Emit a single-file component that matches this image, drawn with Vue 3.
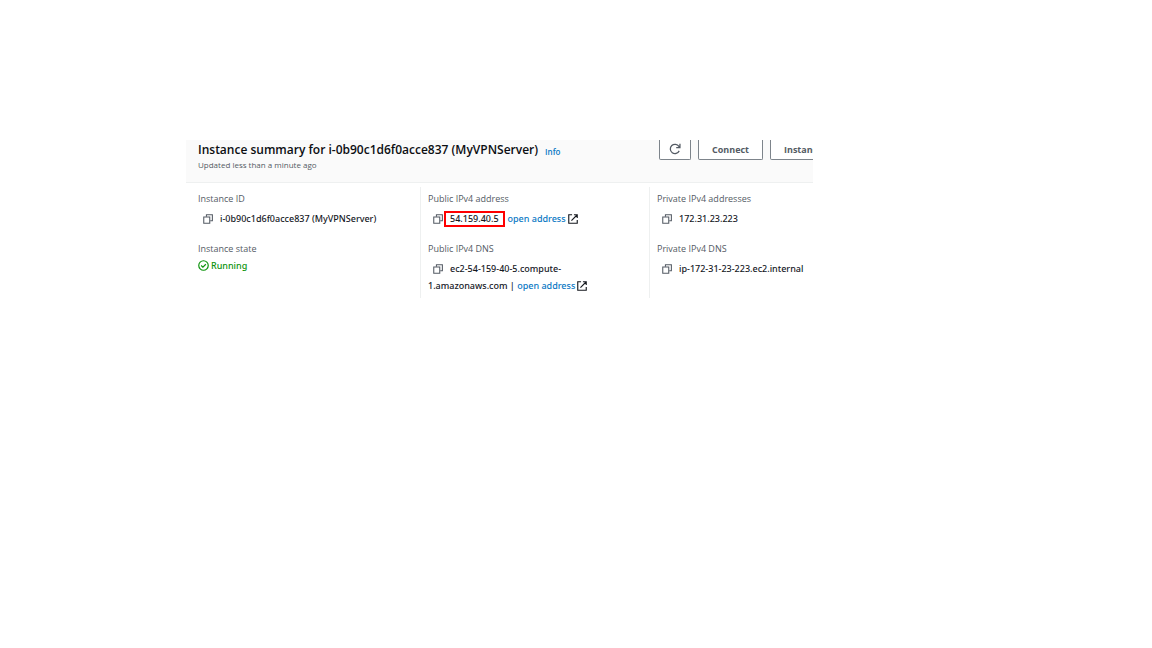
<script setup>
const copyBack = 'M5.5 4.5V1.2H15v9.6h-3.4'
const copyFront = 'M1.2 4.8h9.6v10H1.2z'
const external = 'M6.5 1.2H1.2v13.6h13.6V9.5M9.5 1.2h5.3v5.3M14.4 1.6L5.5 10.5'
</script>

<template>
  <main class="page">
    <section class="panel">
      <header class="head">
        <div class="titles">
          <div class="title-row">
            <h1>Instance summary for i-0b90c1d6f0acce837 (MyVPNServer)</h1>
            <a class="info" href="#">Info</a>
          </div>
          <p>Updated less than a minute ago</p>
        </div>
        <div class="actions">
          <button class="refresh" type="button" aria-label="Refresh">
            <svg viewBox="0 0 16 16" width="12" height="12"><path d="M13.6 10.5A6.2 6.2 0 1 1 13.2 4.6L14.3 6.2M14.6 1v5.3H9.6" /></svg>
          </button>
          <button type="button">Connect</button>
          <button type="button">Instance</button>
        </div>
      </header>

      <div class="columns">
        <dl>
          <dt>Instance ID</dt>
          <dd class="first">
            <button class="copy" type="button" aria-label="Copy instance ID"><svg viewBox="0 0 16 16"><path :d="copyBack" /><path :d="copyFront" /></svg></button><span>i-0b90c1d6f0acce837 (MyVPNServer)</span>
          </dd>
          <dt>Instance state</dt>
          <dd class="state">
            <svg viewBox="0 0 16 16"><circle cx="8" cy="8" r="6.9" /><path d="M4.6 8l2.5 2.5 4.3-4.3" /></svg><span>Running</span>
          </dd>
        </dl>
        <dl>
          <dt>Public IPv4 address</dt>
          <dd class="first">
            <button class="copy tight" type="button" aria-label="Copy public address"><svg viewBox="0 0 16 16"><path :d="copyBack" /><path :d="copyFront" /></svg></button><mark>54.159.40.5</mark><a href="#">open address<svg class="ext" viewBox="0 0 16 16"><path :d="external" /></svg></a>
          </dd>
          <dt>Public IPv4 DNS</dt>
          <dd>
            <button class="copy" type="button" aria-label="Copy public DNS"><svg viewBox="0 0 16 16"><path :d="copyBack" /><path :d="copyFront" /></svg></button><span>ec2-54-159-40-5.compute-</span>
          </dd>
          <dd><span>1.amazonaws.com |&nbsp;</span><a href="#">open address<svg class="ext" viewBox="0 0 16 16"><path :d="external" /></svg></a></dd>
        </dl>
        <dl>
          <dt>Private IPv4 addresses</dt>
          <dd class="first">
            <button class="copy" type="button" aria-label="Copy private address"><svg viewBox="0 0 16 16"><path :d="copyBack" /><path :d="copyFront" /></svg></button><span>172.31.23.223</span>
          </dd>
          <dt>Private IPv4 DNS</dt>
          <dd>
            <button class="copy" type="button" aria-label="Copy private DNS"><svg viewBox="0 0 16 16"><path :d="copyBack" /><path :d="copyFront" /></svg></button><span>ip-172-31-23-223.ec2.internal</span>
          </dd>
        </dl>
      </div>
    </section>
  </main>
</template>

<style>
body {
  margin: 0;
  background: #fff;
}
</style>

<style scoped>
.page {
  padding: 140px 339px 0 186px;
  font-family: "Open Sans", "Noto Sans", sans-serif;
  font-size: 9px;
  line-height: 17px;
  color: #16191f;
}
.panel {
  overflow: hidden;
}
.head {
  display: flex;
  justify-content: space-between;
  height: 42px;
  padding-left: 12px;
  background: #fafafa;
  border-bottom: 1px solid #eef0f0;
}
.title-row {
  display: flex;
  align-items: center;
  gap: 7px;
  height: 19px;
  white-space: nowrap;
}
h1 {
  margin: 0;
  font-size: 12px;
  line-height: 19px;
  font-weight: 600;
  color: #0c0e12;
}
.info {
  padding-top: 3px;
  font-size: 8px;
  font-weight: 600;
}
p {
  margin: 0;
  font-size: 8px;
  line-height: 11px;
  color: #545b64;
}
a {
  color: #0a78c4;
  text-decoration: none;
}
.actions {
  display: flex;
  flex: none;
  gap: 7px;
  width: 154px;
  overflow: hidden;
}
button {
  font: inherit;
  color: #545b64;
}
.actions button {
  flex: none;
  height: 20px;
  padding: 0 13px 1px;
  background: #fff;
  border: 1px solid #7d848b;
  border-top: 0;
  border-radius: 0 0 2px 2px;
  font-weight: 700;
}
.actions .refresh {
  display: grid;
  place-items: center;
  width: 32px;
  padding: 0 0 1px;
}
svg {
  flex: none;
  fill: none;
  stroke: currentColor;
  stroke-width: 1.7;
}
.columns {
  display: grid;
  grid-template-columns: 234fr 229fr 164fr;
  padding-top: 4px;
}
dl {
  min-width: 0;
  margin: 0;
  padding: 3px 0 4px 7px;
  white-space: nowrap;
}
dl:first-child {
  padding-left: 12px;
}
dl + dl {
  border-left: 1px solid #eef0f0;
}
dt {
  color: #545b64;
}
dd {
  display: flex;
  align-items: center;
  margin: 0;
  font-family: "Noto Sans", "Open Sans", sans-serif;
  font-weight: 500;
}
dt + dd {
  padding-top: 3px;
}
.first {
  padding-bottom: 13px;
}
dt + .state {
  gap: 2px;
  padding-top: 0;
  color: #0c930c;
}
.state svg {
  width: 11px;
  height: 11px;
}
.copy {
  display: flex;
  margin: 0 7px 0 5px;
  padding: 0;
  background: none;
  border: 0;
}
.copy svg {
  width: 10px;
  height: 10px;
}
.tight {
  margin-right: 1px;
}
mark {
  margin: 0 3px 0 0;
  padding: 0 4px;
  line-height: 12px;
  color: inherit;
  background: none;
  border: 2px solid #f00;
}
dd a {
  display: flex;
  align-items: center;
  gap: 2px;
}
.ext {
  width: 10px;
  height: 10px;
  color: #16191f;
  stroke-width: 1.8;
}
</style>
